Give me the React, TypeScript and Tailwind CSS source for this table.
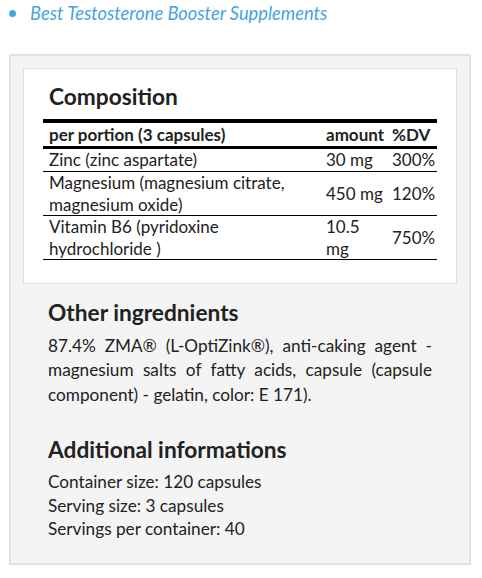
const rows = [
  { name: 'Zinc (zinc aspartate)', amount: '30 mg', dv: '300%', lh: 'leading-[22px]' },
  { name: 'Magnesium (magnesium citrate, magnesium oxide)', amount: '450 mg', dv: '120%', lh: 'leading-[21.5px]' },
  { name: 'Vitamin B6 (pyridoxine hydrochloride )', amount: '10.5 mg', dv: '750%', lh: 'leading-[21.5px]' },
]

export default function App() {
  return (
    <div className="min-h-[578px] bg-white text-[#222] font-['Lato',sans-serif]">
      {/* related link */}
      <div className="flex items-center pt-[1px] h-[25px]">
        <span className="ml-[9px] w-[7px] h-[7px] rounded-full bg-[#47a3e0]" />
        <a className="ml-[14px] text-[18.3px] leading-[24px] italic text-[#47a3e0]">
          Best Testosterone Booster Supplements
        </a>
      </div>

      <div className="ml-[9px] mt-[29px] w-[462px] border-2 border-[#e3e3e3] bg-[#f4f4f4] p-[12px] pb-[22px]">
        {/* composition */}
        <div className="bg-white border border-[#dedede] pt-[15px] pb-[23px] px-[19px]">
          <h2 className="ml-[6px] text-[22.7px] leading-[26px] font-bold text-[#222]">Composition</h2>
          <div className="mt-[9px] w-[394px] text-[17px]">
            <div className="grid grid-cols-[277px_66px_51px] items-center border-t-4 border-b-[3px] border-black leading-[23px] font-bold whitespace-nowrap">
              <div className="pl-[6px]">per portion (3 capsules)</div>
              <div className="pl-[6px]">amount</div>
              <div className="pl-[6px]">%DV</div>
            </div>
            {rows.map((r) => (
              <div
                key={r.name}
                className={`grid grid-cols-[277px_66px_51px] items-center border-b border-black ${r.lh}`}
              >
                <div className="pl-[6px] pr-[20px]">{r.name}</div>
                <div className="pl-[6px]">{r.amount}</div>
                <div className="pl-[6px]">{r.dv}</div>
              </div>
            ))}
          </div>
        </div>

        {/* other ingredients */}
        <div className="px-[25px] pt-[16px]">
          <h2 className="text-[22.7px] leading-[26px] font-bold">Other ingrednients</h2>
          <p className="mt-[7.5px] text-[17.2px] leading-[24.5px] text-justify">
            87.4% ZMA® (L-OptiZink®), anti-caking agent - magnesium salts of fatty acids, capsule (capsule component) - gelatin, color: E 171).
          </p>

          <h2 className="mt-[29.5px] text-[22.7px] leading-[26px] font-bold">Additional informations</h2>
          <div className="mt-[7.5px] text-[17.2px] leading-[23.5px]">
            <p>Container size: 120 capsules</p>
            <p>Serving size: 3 capsules</p>
            <p>Servings per container: 40</p>
          </div>
        </div>
      </div>
    </div>
  )
}
